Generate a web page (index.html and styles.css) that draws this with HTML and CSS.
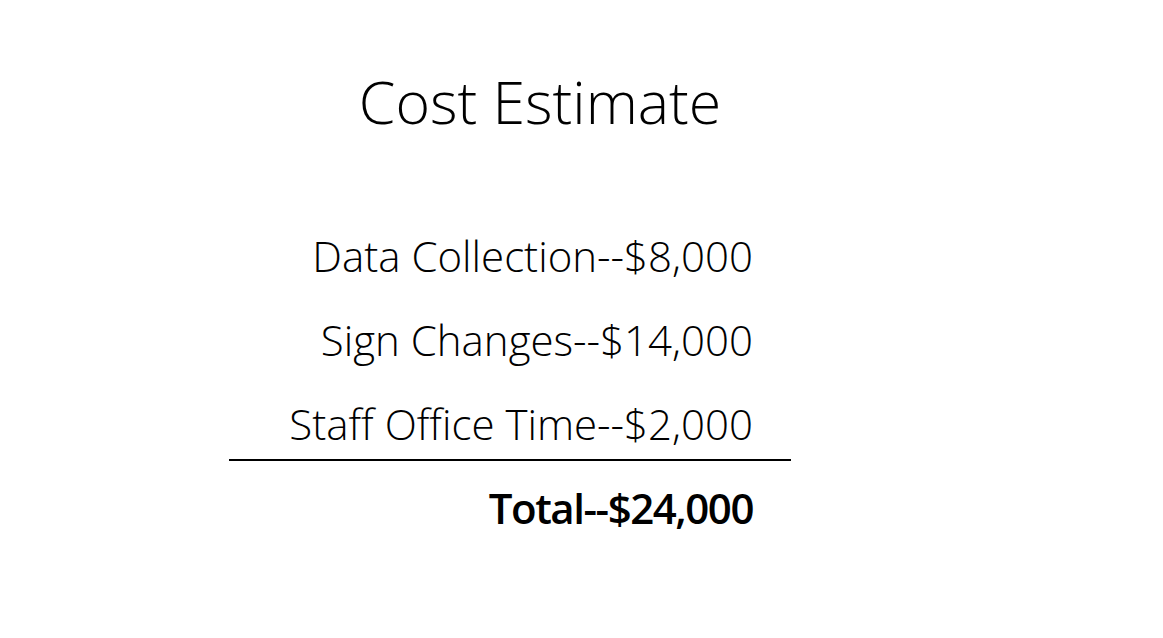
FILE: index.html
```html
<!DOCTYPE html>
<html>
<head>
<meta charset="utf-8">
<link rel="stylesheet" href="styles.css">
</head>
<body>
<div class="slide">
  <h1 class="title">Cost Estimate</h1>
  <div class="items">
    <p class="item">Data Collection--$8,000</p>
    <p class="item">Sign Changes--$14,000</p>
    <p class="item item-last">Staff Office Time--$2,000</p>
    <p class="item total">Total--$24,000</p>
  </div>
</div>
</body>
</html>
```
FILE: styles.css
```css
html, body {
  margin: 0;
  padding: 0;
  background: #fff;
}
.slide {
  width: 1163px;
  height: 638px;
  font-family: "Open Sans", Lato, sans-serif;
  font-weight: 300;
  font-variant-ligatures: none;
  color: #000;
}
.title {
  margin: 0;
  width: 1080px;
  padding-top: 64px;
  text-align: center;
  font-size: 59px;
  font-weight: 300;
  line-height: 74px;
}
.items {
  margin: 76px 0 0 229px;
  width: 562px;
}
.item {
  margin: 0;
  padding-right: 38px;
  text-align: right;
  font-size: 42px;
  line-height: 84px;
}
.item-last {
  border-bottom: 2px solid #000;
  line-height: 71px;
  padding-top: 6px;
}
.total {
  font-weight: 600;
  letter-spacing: -1.45px;
  line-height: 93px;
}
```
